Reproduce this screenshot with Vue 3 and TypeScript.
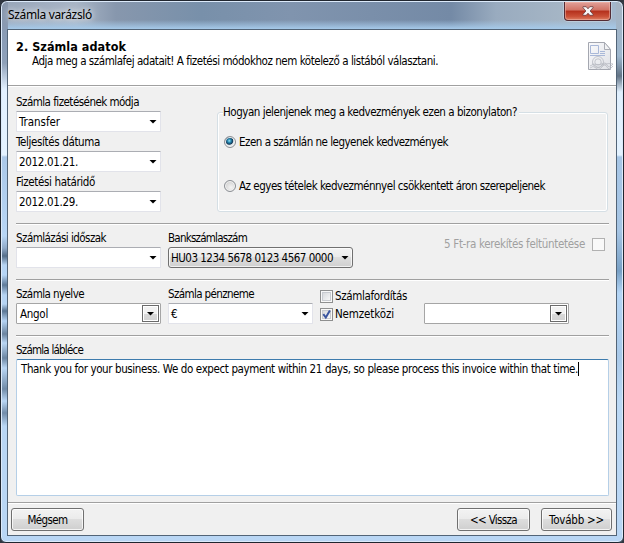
<script setup lang="ts">
import { ref } from 'vue'
import type { Directive } from 'vue'

// Distributes letter spacing so a caption occupies its designed width.
const vFit: Directive<HTMLElement, number> = {
  mounted(el, { value }) {
    const range = document.createRange()
    range.selectNodeContents(el)
    const length = (el.textContent ?? '').length
    el.style.letterSpacing = `${(value - range.getBoundingClientRect().width) / length}px`
  },
}

const terms = [
  { label: 'Számla fizetésének módja', labelWidth: 123, value: 'Transfer', valueWidth: 41 },
  { label: 'Teljesítés dátuma', labelWidth: 84, value: '2012.01.21.', valueWidth: 59 },
  { label: 'Fizetési határidő', labelWidth: 79, value: '2012.01.29.', valueWidth: 59 },
]
const discounts = [
  { text: 'Ezen a számlán ne legyenek kedvezmények', width: 209 },
  { text: 'Az egyes tételek kedvezménnyel csökkentett áron szerepeljenek', width: 306 },
]
const selected = ref(0)
const reverse = ref(false)
const international = ref(true)
</script>

<template>
  <div class="window">
    <header class="titlebar">
      <span class="title"><span v-fit="84">Számla varázsló</span></span>
      <button class="close" aria-label="Bezárás">
        <svg width="12" height="10" viewBox="0 0 12 10">
          <path d="M1 .7h3.2L6 2.8 7.8.7H11v1L8.1 5 11 8.3v1H7.8L6 7.2 4.2 9.3H1v-1L3.9 5 1 1.7z" fill="#f7f7f7" stroke="#693b3d" stroke-width=".8" />
        </svg>
      </button>
    </header>

    <main class="client">
      <section class="heading">
        <div>
          <h1><span v-fit="110">2. Számla adatok</span></h1>
          <p><span v-fit="406">Adja meg a számlafej adatait! A fizetési módokhoz nem kötelező a listából választani.</span></p>
        </div>
        <svg class="document" width="27" height="30" viewBox="0 0 27 30">
          <defs><linearGradient id="paper" x2="1" y2="1"><stop stop-color="#fafafc" /><stop offset="1" stop-color="#dfe1e6" /></linearGradient></defs>
          <path d="M1.5 1.5h16l6 7v20h-22z" fill="url(#paper)" stroke="#a4a7b0" />
          <path d="M17.5 1.5v7h6z" fill="#f2f3f5" stroke="#a9acb4" />
          <path d="M3.5 4.5h8v8h-8zM13 10.5h5M13 12.5h5M3 14.5h15" fill="none" stroke="#a9b8d8" />
          <g fill="none" stroke="#b7bac1" stroke-width=".8">
            <circle cx="11" cy="21" r="5.5" /><circle cx="11" cy="21" r="3.2" />
            <path d="M3 25q3-3 6 0t6-1 5 0 6-1M3 27q3-3 6 0t6-1 5 0 6-1M14 22q3 2 5 1t7 0M5 23l12 1" />
          </g>
        </svg>
      </section>

      <section class="body">
        <div class="terms-row">
          <div class="terms">
            <div v-for="term in terms" :key="term.label" class="term">
              <label><span v-fit="term.labelWidth">{{ term.label }}</span></label>
              <div class="combo"><span v-fit="term.valueWidth">{{ term.value }}</span><i class="arrow" /></div>
            </div>
          </div>
          <fieldset class="discounts">
            <legend><span v-fit="294">Hogyan jelenjenek meg a kedvezmények ezen a bizonylaton?</span></legend>
            <div v-for="(item, index) in discounts" :key="item.text" class="option" @click="selected = index">
              <i class="radio" :class="{ on: selected === index }" />
              <span v-fit="item.width">{{ item.text }}</span>
            </div>
          </fieldset>
        </div>

        <hr>

        <div class="row">
          <div class="field">
            <label><span v-fit="90">Számlázási időszak</span></label>
            <div class="combo"><span /><i class="arrow" /></div>
          </div>
          <div class="field bank">
            <label><span v-fit="79">Bankszámlaszám</span></label>
            <div class="combo raised"><span v-fit="162">HU03 1234 5678 0123 4567 0000</span><i class="arrow" /></div>
          </div>
          <div class="rounding">
            <span v-fit="141">5 Ft-ra kerekítés feltüntetése</span><i class="check disabled" />
          </div>
        </div>

        <hr>

        <div class="row">
          <div class="field">
            <label><span v-fit="68">Számla nyelve</span></label>
            <div class="combo boxed"><span v-fit="28">Angol</span><b class="drop"><i class="arrow" /></b></div>
          </div>
          <div class="field">
            <label><span v-fit="86">Számla pénzneme</span></label>
            <div class="combo"><span>€</span><i class="arrow" /></div>
          </div>
          <div class="checks">
            <div class="tick" @click="reverse = !reverse">
              <i class="check"><svg v-if="reverse" viewBox="0 0 11 11"><path d="M2 5l2.5 4L9 1" /></svg></i>
              <span v-fit="72">Számlafordítás</span>
            </div>
            <div class="tick" @click="international = !international">
              <i class="check"><svg v-if="international" viewBox="0 0 11 11"><path d="M2.3 5.2l2.5 3.3L8.9 1.5" /></svg></i>
              <span v-fit="59">Nemzetközi</span>
            </div>
          </div>
          <div class="combo boxed partner"><span /><b class="drop"><i class="arrow" /></b></div>
        </div>

        <hr>

        <label class="note-label"><span v-fit="67">Számla lábléce</span></label>
        <div class="note"><span v-fit="557">Thank you for your business. We do expect payment within 21 days, so please process this invoice within that time.</span><i class="caret" /></div>
      </section>

      <footer>
        <button class="btn"><span v-fit="40">Mégsem</span></button>
        <button class="btn back"><span v-fit="47">&lt;&lt; Vissza</span></button>
        <button class="btn next"><span v-fit="55">Tovább &gt;&gt;</span></button>
      </footer>
    </main>
  </div>
</template>

<style>
body { background: #303640; overflow: hidden; }
</style>

<style scoped>
* { box-sizing: border-box; }
.window {
  width: 624px; height: 543px; padding: 1px 6px 6px;
  border: 1px solid #20262f; border-radius: 7px 7px 6px 6px;
  font: 11.5px/14px "DejaVu Sans Condensed", "DejaVu Sans", sans-serif;
  font-stretch: condensed;
  color: #000; white-space: nowrap;
  box-shadow: inset 0 0 0 1px #dceafa;
  background:
    linear-gradient(#8795aa 0, #8b9eb8 45px, #8fa1b9 62px, #e2f0ff 88px, #e4f2ff 154px, #abc8e8 156px, #b8d6f5 235px, #91abc9 247px, #556e89 255px, #b6d4f3 264px, #b5d5f6 274px, #607b99 284px, #b6d4f3 294px, #b6d4f3 303px, #5b7693 310px, #b5d3f3 320px, #6b849f 333px, #b9d6f4 342px, #6c86a2 357px, #b9d6f4 367px, #718ba7 388px, #b9d6f4 400px, #728ca9 412px, #b9d6f4 425px, #b9d6f4) left / 7px 100% no-repeat,
    linear-gradient(#a6b4c3 0, #9eb7ce 55px, #637486 75px, #e0effd 91px, #e3f2ff 154px, #a7c6e6 156px, #a6c5e4 230px, #78a0c5 270px, #b4d5f5 292px, #a9c9e9 355px, #bbd8f4 400px, #b9d6f4) right / 7px 100% no-repeat,
    linear-gradient(transparent 0 19px, #a6caea 28px, transparent 29px),
    linear-gradient(90deg, #97a5b8 0, #a8b5c6 75px, #8797ad 115px, #7890aa 200px, #8094ae 290px, #748aa6 450px, #99abbf 495px, #a7b7c6 570px, #a3b7cc 610px) top / 100% 30px no-repeat,
    #b9d6f4;
}
.titlebar { height: 27px; display: flex; justify-content: space-between; align-items: flex-start; }
.title { font: 12px/14px "Noto Sans", "Open Sans", sans-serif; margin: 6px 0 0 1px; text-shadow: 0 0 8px #fff, 0 0 5px #ffffffb0; }
.close {
  width: 47px; height: 19px; margin-right: 6px; padding: 0; display: flex; align-items: center; justify-content: center;
  border: 1px solid #542b34; border-top: 0; border-radius: 0 0 4px 4px;
  background: linear-gradient(#e1a19a 0, #d17365 45%, #b4301c 50%, #ca5037 80%, #dd8064 100%);
  box-shadow: inset 0 0 0 1px #f0b9ad88, 0 0 0 1px #d4dde780;
}
.client { width: 610px; height: 507px; border: 1px solid #526477; background: #f0f0f0; display: flex; flex-direction: column; }
.heading { height: 56px; flex: none; background: #fff; border-bottom: 1px solid #a0a0a0; box-shadow: 0 1px #fff; display: flex; justify-content: space-between; padding: 9px 2px 0 8px; }
h1 { margin: 0; font-size: 12.5px; font-weight: 700; line-height: 15px; }
.heading p { margin: 0 0 0 16px; }
.document { margin-top: 2px; }
.body { padding: 9px 7px 0 8px; height: 416px; flex: none; }
label { display: block; height: 14px; }
.terms-row { display: flex; gap: 57px; height: 128px; }
.term { width: 144px; height: 40px; }
.term label { margin-bottom: 2px; }
.combo { width: 145px; height: 21px; padding: 0 3px 0 2px; display: flex; align-items: center; justify-content: space-between; background: #fff; border: 1px solid #e2e3ea; border-top-color: #abadb3; border-radius: 1px; }
.arrow { width: 8px; height: 4px; background: #000; clip-path: polygon(0 0, 100% 0, 50% 100%); flex: none; }
.discounts { margin: 10px 0 0; padding: 0; width: 391px; height: 107px; min-width: 0; border: 1px solid #d5dfe5; border-radius: 3px; box-shadow: inset 0 0 0 1px #fff; }
legend { margin-left: 5px; padding: 0; width: 296px; height: 14px; background: #f0f0f0; }
.option { display: flex; align-items: center; gap: 3px; height: 14px; margin: 16px 0 0 6px; }
.option + .option { margin-top: 30px; }
.radio { width: 12px; height: 12px; border: 1px solid #8b8f94; border-radius: 50%; background: radial-gradient(circle at 60% 65%, #f5f5f5, #d0d0d0 75%); box-shadow: inset 0 0 0 1px #f4f4f4; }
.radio.on { background: radial-gradient(circle at 43% 38%, #9de2f5 0, #2286af 1.8px, #153a59 3.5px, #e2e7e9 4.4px); }
hr { height: 2px; margin: 0; border: 0; border-top: 1px solid #a0a0a0; border-bottom: 1px solid #fff; }
.row { display: flex; height: 54px; padding-top: 6px; gap: 7px; }
.field { width: 145px; flex: none; }
.field label { margin-bottom: 2px; }
.bank { width: 185px; }
.raised { width: 185px; padding: 0 3px 0 2px; border: 1px solid #707070; border-radius: 3px; background: linear-gradient(#f3f3f3, #ebebeb 48%, #dedede 50%, #d0d0d0); box-shadow: inset 0 0 0 1px #ffffffb0; }
.boxed { border: 1px solid #a5a5a5; padding: 0 1px 0 3px; }
.drop { width: 17px; height: 17px; border: 1px solid #6b6b6b; box-shadow: inset 0 0 0 1px #fff; background: linear-gradient(#f2f2f2 50%, #dadada 50%, #d2d2d2); display: flex; align-items: center; justify-content: center; }
.rounding { margin: 6px 4px 0 auto; height: 14px; display: flex; align-items: center; color: #a0a0a0; }
.rounding .check { margin-left: 7px; }
.check { display: block; width: 13px; height: 13px; border: 1px solid #8e8f8f; background: linear-gradient(135deg, #cfd2d6, #f4f4f4 75%); box-shadow: inset 0 0 0 1px #f8f8f8, inset 0 0 0 2px #c8cbd0; flex: none; }
.check.disabled { border-color: #b1b1b1; background: #f9f9f9; box-shadow: none; }
.check svg { display: block; width: 11px; height: 11px; }
.check path { fill: none; stroke: #3a55a0; stroke-width: 2; }
.checks { width: 104px; }
.tick { display: flex; align-items: center; gap: 2px; height: 18px; }
.row .partner { margin: 16px 0 0 -7px; }
.note-label { margin-top: 6px; }
.note { height: 137px; margin-top: 2px; padding: 2px 4px; border: 1px solid #b5cfe7; border-top-color: #3d7bad; border-radius: 2px; background: #fff; display: flex; }
.caret { width: 1px; height: 14px; background: #000; }
footer { height: 33px; flex: none; border-top: 1px solid #a0a0a0; box-shadow: inset 0 1px #fff; display: flex; padding: 5px 4px 0 3px; }
.btn { width: 73px; height: 23px; padding: 0; border: 1px solid #707070; border-radius: 3px; color: #000; font: inherit; background: linear-gradient(#f3f3f3, #ebebeb 48%, #dddddd 50%, #cfcfcf); box-shadow: inset 0 0 0 1px #ffffffc0; }
.back { margin-left: auto; }
.next { width: 71px; margin-left: 11px; }
</style>
